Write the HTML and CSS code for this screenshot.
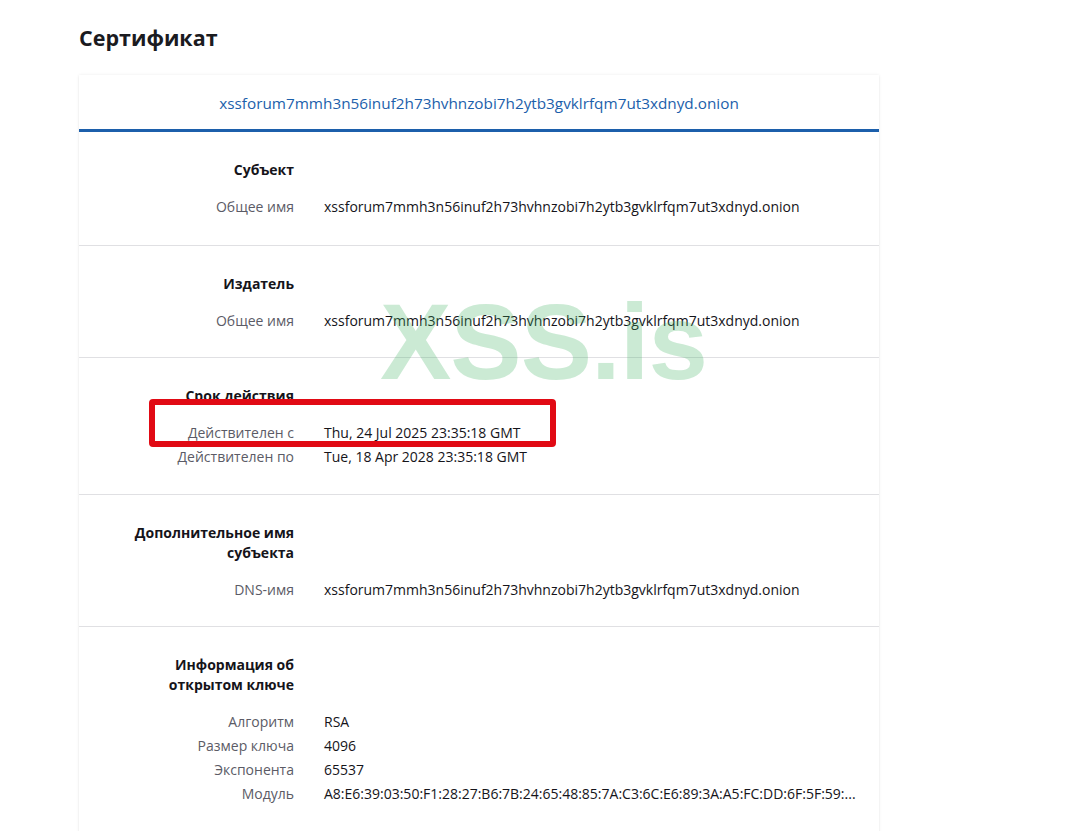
FILE: index.html
```html
<!DOCTYPE html>
<html lang="ru">
<head>
<meta charset="utf-8">
<title>Сертификат</title>
<link rel="stylesheet" href="styles.css">
</head>
<body>
<main class="page">
  <h1 class="page-title">Сертификат</h1>
  <section class="card">
    <div class="tab-bar">
      <div class="tab">xssforum7mmh3n56inuf2h73hvhnzobi7h2ytb3gvklrfqm7ut3xdnyd.onion</div>
    </div>
    <div class="info-group group-first">
      <div class="group-title">Субъект</div>
      <div class="rows">
        <div class="label">Общее имя</div><div class="value">xssforum7mmh3n56inuf2h73hvhnzobi7h2ytb3gvklrfqm7ut3xdnyd.onion</div>
      </div>
    </div>
    <div class="info-group">
      <div class="group-title">Издатель</div>
      <div class="rows">
        <div class="label">Общее имя</div><div class="value">xssforum7mmh3n56inuf2h73hvhnzobi7h2ytb3gvklrfqm7ut3xdnyd.onion</div>
      </div>
    </div>
    <div class="info-group group-validity">
      <div class="group-title">Срок действия</div>
      <div class="rows">
        <div class="label">Действителен с</div><div class="value">Thu, 24 Jul 2025 23:35:18 GMT</div>
        <div class="label">Действителен по</div><div class="value">Tue, 18 Apr 2028 23:35:18 GMT</div>
      </div>
    </div>
    <div class="info-group">
      <div class="group-title">Дополнительное имя субъекта</div>
      <div class="rows">
        <div class="label">DNS-имя</div><div class="value">xssforum7mmh3n56inuf2h73hvhnzobi7h2ytb3gvklrfqm7ut3xdnyd.onion</div>
      </div>
    </div>
    <div class="info-group group-last">
      <div class="group-title">Информация об открытом ключе</div>
      <div class="rows">
        <div class="label">Алгоритм</div><div class="value">RSA</div>
        <div class="label">Размер ключа</div><div class="value">4096</div>
        <div class="label">Экспонента</div><div class="value">65537</div>
        <div class="label">Модуль</div><div class="value">A8:E6:39:03:50:F1:28:27:B6:7B:24:65:48:85:7A:C3:6C:E6:89:3A:A5:FC:DD:6F:5F:59:...</div>
      </div>
    </div>
  </section>
</main>
<div class="highlight-box"></div>
<div class="watermark">XSS.is</div>
</body>
</html>
```

FILE: styles.css
```css
html, body {
  margin: 0;
  padding: 0;
  background: #ffffff;
  overflow: hidden;
}
body {
  font-family: "Open Sans", "Noto Sans", sans-serif;
  color: #15141a;
  width: 1082px;
  height: 831px;
  position: relative;
}
.page {
  padding: 23px 0 0 79px;
}
.page-title {
  margin: 0 0 22px 0;
  font-size: 21.5px;
  line-height: 30px;
  font-weight: 700;
  color: #1b1b1f;
}
.card {
  width: 800px;
  background: #fff;
  box-shadow: 0 0 3px rgba(0,0,0,0.08), 0 1px 2px rgba(0,0,0,0.05);
}
.tab-bar {
  border-bottom: 3px solid #1c5fab;
  display: flex;
  justify-content: center;
}
.tab {
  padding: 18px 0 15px;
  line-height: 21px;
  font-size: 15.3px;
  color: #1c5fab;
}
.info-group {
  padding: 28px 0 24px 35px;
  border-bottom: 1px solid #e0e0e3;
}
.group-first {
  padding-bottom: 26px;
}
.group-validity {
  padding-bottom: 25px;
}
.group-last {
  padding-bottom: 60px;
  border-bottom: none;
}
.group-title {
  width: 180px;
  text-align: right;
  font-weight: 700;
  font-size: 14px;
  line-height: 20px;
  margin-bottom: 15px;
}
.rows {
  display: grid;
  grid-template-columns: 180px 1fr;
  column-gap: 30px;
  font-size: 14px;
  line-height: 24px;
}
.label {
  text-align: right;
  color: #5b5b66;
}
.value {
  color: #15141a;
}
.highlight-box {
  position: absolute;
  left: 149px;
  top: 399px;
  width: 395px;
  height: 36px;
  border: 6px solid #e10a14;
  border-radius: 4px;
}
.watermark {
  position: absolute;
  left: 380px;
  top: 279px;
  font-family: "Liberation Sans", Arial, sans-serif;
  font-weight: 700;
  font-size: 107px;
  line-height: 126px;
  color: rgba(70, 180, 100, 0.28);
  letter-spacing: -1px;
}
```
